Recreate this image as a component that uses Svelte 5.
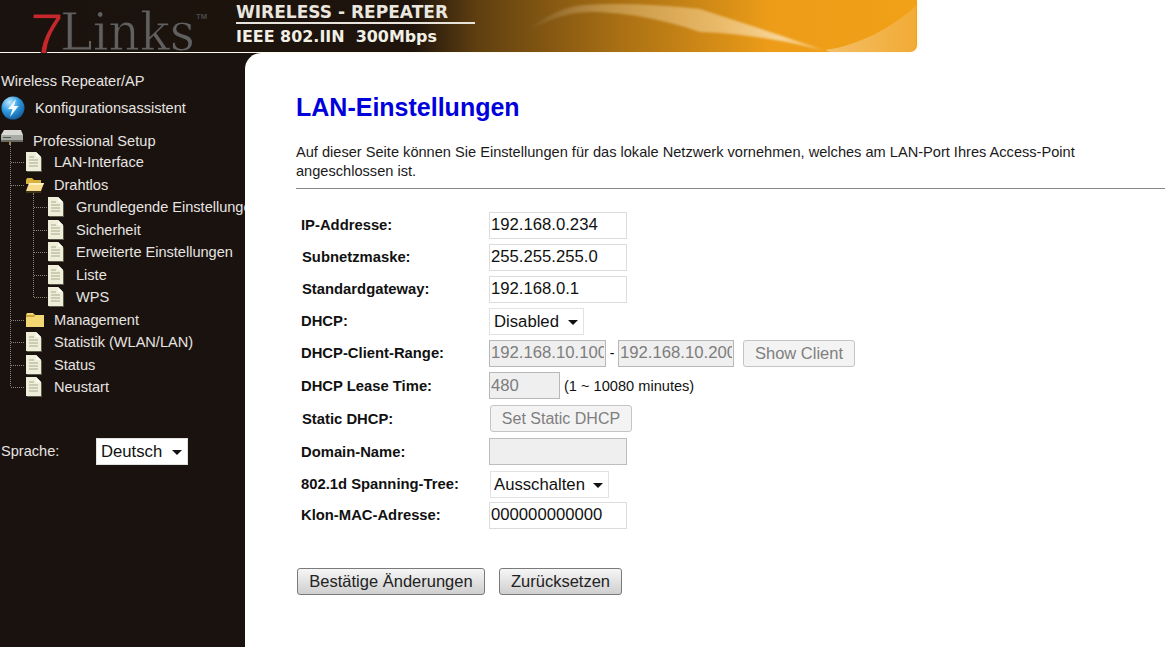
<script>
  const tree = [
    { label: 'LAN-Interface', icon: 'doc', depth: 1 },
    { label: 'Drahtlos', icon: 'open', depth: 1 },
    { label: 'Grundlegende Einstellungen', icon: 'doc', depth: 2 },
    { label: 'Sicherheit', icon: 'doc', depth: 2 },
    { label: 'Erweiterte Einstellungen', icon: 'doc', depth: 2 },
    { label: 'Liste', icon: 'doc', depth: 2 },
    { label: 'WPS', icon: 'doc', depth: 2 },
    { label: 'Management', icon: 'folder', depth: 1 },
    { label: 'Statistik (WLAN/LAN)', icon: 'doc', depth: 1 },
    { label: 'Status', icon: 'doc', depth: 1 },
    { label: 'Neustart', icon: 'doc', depth: 1 }
  ];
</script>

<div class="page">
  <header class="banner">
    <svg width="940" height="53" viewBox="0 0 940 53" aria-label="7Links Wireless Repeater">
      <defs>
        <linearGradient id="bg" x1="0" x2="1" y1="0" y2="0">
          <stop offset="0" stop-color="#1a120e" />
          <stop offset="0.45" stop-color="#1e140c" />
          <stop offset="0.52" stop-color="#5f3f10" />
          <stop offset="0.68" stop-color="#ab7114" />
          <stop offset="0.84" stop-color="#ec9c18" />
          <stop offset="1" stop-color="#f1a116" />
        </linearGradient>
        <linearGradient id="wave" x1="0" x2="1" y1="0" y2="0">
          <stop offset="0" stop-color="#fff" stop-opacity="0" />
          <stop offset="0.3" stop-color="#f0cf90" stop-opacity="0.4" />
          <stop offset="0.65" stop-color="#f6d8a0" stop-opacity="0.6" />
          <stop offset="0.85" stop-color="#fbe6c0" stop-opacity="0.75" />
          <stop offset="1" stop-color="#fbe2b0" stop-opacity="0.5" />
        </linearGradient>
        <linearGradient id="gloss" x1="0" x2="1" y1="0" y2="0">
          <stop offset="0" stop-color="#f6cf90" stop-opacity="0.7" />
          <stop offset="1" stop-color="#f4c070" stop-opacity="0.35" />
        </linearGradient>
        <filter id="halo" x="-2%" y="-10%" width="104%" height="125%"><feGaussianBlur stdDeviation="2.2" /></filter>
        <filter id="soft" x="-5%" y="-20%" width="110%" height="140%"><feGaussianBlur stdDeviation="0.9" /></filter>
      </defs>
      <path d="M0 0H917V45a7 7 0 0 1-7 7H0Z" fill="#fff3d8" filter="url(#halo)" />
      <path d="M0 0H917V45a7 7 0 0 1-7 7H0Z" fill="url(#bg)" />
      <path d="M525 32C545 17 560 7 585 5C630 2 680 7 700 9C740 22 790 38 825 51C790 42 745 33 700 32C660 18 620 12 590 12C565 12 545 22 525 32Z" fill="url(#wave)" filter="url(#soft)" />
      <path d="M825 50C860 46 895 25 916 6V45a7 7 0 0 1-7 7H830Z" fill="url(#gloss)" />

      <text class="seven" x="30" y="56">7</text>
      <text class="links" x="60" y="50" textLength="135" lengthAdjust="spacingAndGlyphs">Links</text>
      <text class="tm" x="196" y="19" textLength="11" lengthAdjust="spacingAndGlyphs">TM</text>

      <text class="w1" x="236" y="17.5" textLength="212" lengthAdjust="spacingAndGlyphs">WIRELESS - REPEATER</text>
      <rect x="236" y="22" width="239" height="2" fill="#e8e4dc" />
      <text class="w2" x="236" y="42" textLength="201" lengthAdjust="spacingAndGlyphs">IEEE 802.IIN  300Mbps</text>
    </svg>
  </header>

  <div class="body">
    <aside class="side">
      <div class="brand">Wireless Repeater/AP</div>
      <div class="wizard">
        <svg width="24" height="24" viewBox="0 0 24 24" aria-hidden="true">
          <defs>
            <radialGradient id="orb" cx="0.35" cy="0.25" r="0.9">
              <stop offset="0" stop-color="#bfe8ff" />
              <stop offset="0.45" stop-color="#2f9be0" />
              <stop offset="1" stop-color="#0b4a8a" />
            </radialGradient>
          </defs>
          <circle cx="12" cy="12" r="11.5" fill="url(#orb)" />
          <path d="M15 3 7 13h4.5L9 21l8.5-11H13Z" fill="#f4fbff" />
        </svg>
        <span>Konfigurationsassistent</span>
      </div>

      <nav class="tree">
        <span class="vline outer"></span>
        <span class="vline inner"></span>
        <div class="root">
          <svg width="24" height="16" viewBox="0 0 24 16" aria-hidden="true">
            <path d="M4 1h17l2 5H1Z" fill="#d8d8d4" />
            <rect x="1" y="6" width="22" height="5" fill="#a9aba6" />
            <rect x="3" y="8" width="8" height="1" fill="#4b5a48" />
            <rect x="1" y="11" width="22" height="2" fill="#6a6a62" />
            <rect x="9" y="13" width="2" height="3" fill="#b08a50" />
          </svg>
          <span>Professional Setup</span>
        </div>
        {#each tree as item}
          <div class="row" class:deep={item.depth === 2}>
            <span class="icon">
              {#if item.icon === 'doc'}
                <svg width="18" height="20" viewBox="0 0 18 20" aria-hidden="true">
                  <path d="M2 1h10l5 5v14H2Z" fill="#5a5a4c" />
                  <path d="M1 0h10l5 5v14H1Z" fill="#efefd9" />
                  <path d="M11 0v5h5Z" fill="#fbfbf2" />
                  <path d="M4 5h5M4 8h9M4 11h9M4 14h9" stroke="#a8a890" stroke-width="1" />
                </svg>
              {:else if item.icon === 'open'}
                <svg width="20" height="16" viewBox="0 0 20 16" aria-hidden="true">
                  <path d="M1 3l1-2h5l2 2h7v4H1Z" fill="#d9b23e" />
                  <path d="M1 14 4 6h15l-3 8Z" fill="#f6dc8c" />
                  <path d="M4 6h15l-1 2H4Z" fill="#fff2c0" />
                  <path d="M1 15h15" stroke="#6a5320" />
                </svg>
              {:else}
                <svg width="20" height="16" viewBox="0 0 20 16" aria-hidden="true">
                  <path d="M1 3l1-2h6l2 2h9v12H1Z" fill="#f3d773" />
                  <path d="M1 3h9l-1 2H1Z" fill="#caa63a" />
                </svg>
              {/if}
            </span>
            <span class="label">{item.label}</span>
          </div>
        {/each}
      </nav>

      <div class="lang">
        <span>Sprache:</span>
        <span class="select lang-select"><select><option>Deutsch</option></select></span>
      </div>
    </aside>

    <main class="main">
      <h1>LAN-Einstellungen</h1>
      <p>Auf dieser Seite können Sie Einstellungen für das lokale Netzwerk vornehmen, welches am LAN-Port Ihres Access-Point angeschlossen ist.</p>
      <hr />

      <form class="form">
        <div class="f"><label for="ip">IP-Addresse:</label><input id="ip" class="w138" value="192.168.0.234" /></div>
        <div class="f"><label for="sn" class="nudge">Subnetzmaske:</label><input id="sn" class="w138" value="255.255.255.0" /></div>
        <div class="f"><label for="gw" class="nudge">Standardgateway:</label><input id="gw" class="w138" value="192.168.0.1" /></div>
        <div class="f"><label for="dh">DHCP:</label><span class="select dhcp"><select id="dh"><option>Disabled</option></select></span></div>
        <div class="f">
          <label for="r1">DHCP-Client-Range:</label>
          <input id="r1" class="w117" disabled value="192.168.10.100" />
          <span class="dash">-</span>
          <input class="w116" disabled value="192.168.10.200" />
          <button type="button" class="btn off show" disabled>Show Client</button>
        </div>
        <div class="f tall"><label for="ls">DHCP Lease Time:</label><input id="ls" class="w71" disabled value="480" /><span class="hint">(1 ~ 10080 minutes)</span></div>
        <div class="f tall"><label class="nudge" for="st">Static DHCP:</label><button id="st" type="button" class="btn off static" disabled>Set Static DHCP</button></div>
        <div class="f tall"><label for="dn">Domain-Name:</label><input id="dn" class="w138 dark" disabled /></div>
        <div class="f"><label for="sp">802.1d Spanning-Tree:</label><span class="select span"><select id="sp"><option>Ausschalten</option></select></span></div>
        <div class="f mac"><label for="mc">Klon-MAC-Adresse:</label><input id="mc" class="w138" value="000000000000" /></div>
      </form>

      <div class="actions">
        <button type="button" class="btn apply">Bestätige Änderungen</button>
        <button type="button" class="btn reset">Zurücksetzen</button>
      </div>
    </main>
  </div>
</div>

<style>
  :global(body) { margin: 0; background: #fff; }
  .page { width: 1167px; height: 647px; overflow: hidden; font-family: "Liberation Sans", Arial, sans-serif; display: flex; flex-direction: column; }
  .banner { height: 53px; flex: none; }
  .banner svg { display: block; overflow: visible; }
  .seven { font: 400 61px "Liberation Sans", sans-serif; fill: #c5272c; stroke: #1a120e; stroke-width: 0.8; }
  .links { font: 400 52px "DejaVu Serif", serif; fill: #606060; stroke: #1a120e; stroke-width: 0.9; }
  .tm { font: 700 7px "Liberation Sans", sans-serif; fill: #4a4a4a; }
  .w1 { font: 700 17.5px "DejaVu Sans", sans-serif; fill: #e9e6df; }
  .w2 { font: 700 16px "DejaVu Sans", sans-serif; fill: #f2efe6; white-space: pre; }

  .body { flex: 1; display: flex; min-height: 0; background: linear-gradient(to bottom, #1a120e 20px, transparent 20px) no-repeat 0 0 / 270px 100%; }
  .side { width: 245px; flex: none; background: #1a120e; color: #e6e4e2; font-size: 14.6px; overflow: hidden; }
  .brand { padding: 20px 0 0 1px; line-height: 16px; }
  .wizard { display: flex; align-items: center; gap: 10px; margin-top: 4px; padding-left: 1px; height: 30px; }
  .tree { position: relative; margin-top: 7px; }
  .vline { position: absolute; border-left: 1px dotted #8b8474; }
  .vline.outer { left: 10px; top: 14px; height: 242px; }
  .vline.inner { left: 33px; top: 63px; height: 104px; }
  .root { display: flex; align-items: center; gap: 9px; height: 21px; }
  .root svg { margin-top: -7px; }
  .row { position: relative; display: flex; align-items: center; height: 22.5px; padding-left: 25px; white-space: nowrap; }
  .row.deep { padding-left: 47px; }
  .row::before { content: ""; position: absolute; left: 11px; top: 11px; width: 13px; border-top: 1px dotted #8b8474; }
  .row.deep::before { left: 34px; }
  .icon { width: 29px; flex: none; display: flex; align-items: center; }
  .icon svg { display: block; }
  .label { letter-spacing: -0.02px; }
  .lang { display: flex; align-items: center; margin-top: 39px; padding-left: 1px; }
  .lang > span:first-child { width: 95px; }

  .select { position: relative; display: inline-block; height: 27px; box-sizing: border-box; background: #fff; border: 1px solid #e2e2e2; }
  .select::after { content: ""; position: absolute; right: 5px; top: 11px; border: 5px solid transparent; border-top: 5px solid #111; border-bottom: 0; pointer-events: none; }
  select { appearance: none; -webkit-appearance: none; border: 0; outline: 0; background: transparent; width: 100%; height: 100%; font: 16.7px "Liberation Sans", sans-serif; color: #111; padding: 0 0 0 4px; display: block; }
  .lang-select { width: 92px; }
  .dhcp { width: 95px; }
  .span { width: 119px; margin-left: 1px; }
  .span select { padding-left: 3px; }

  .main { flex: 1; background: #fff; border-top-left-radius: 16px; padding: 0 2px 0 51px; min-width: 0; }
  h1 { margin: 40px 0 0; font-size: 25px; line-height: 28px; font-weight: 700; color: #0000dd; }
  p { margin: 22px 0 0; width: 800px; font-size: 14.6px; line-height: 19px; color: #1a1a1a; }
  hr { margin: 7px 0 0; border: 0; border-top: 1px solid #888; height: 0; }

  .form { margin-top: 20px; }
  .f { display: flex; align-items: center; height: 32px; }
  .f.tall { height: 33px; }
  .f.mac { height: 30px; }
  label { width: 193px; flex: none; padding-left: 5px; box-sizing: border-box; font-size: 14.8px; font-weight: 700; color: #111; }
  label.nudge { padding-left: 6px; }
  input { box-sizing: border-box; height: 27px; border: 1px solid #dcdcdc; background: #fff; font: 16.7px "Liberation Sans", sans-serif; color: #111; padding: 0 1px; outline: 0; }
  input:disabled { background: #efefef; border-color: #b8b8b8; color: #7d7d7d; }
  input.dark:disabled { border-color: #bdbdbd; }
  .w138 { width: 138px; }
  .w117 { width: 117px; }
  .w116 { width: 116px; }
  .w71 { width: 71px; }
  .dash { width: 12px; text-align: center; font-size: 14px; }
  .hint { font-size: 14.6px; margin-left: 4px; color: #111; }

  .btn { box-sizing: border-box; height: 27px; padding: 0; border: 1px solid #7a7a7a; border-radius: 3px; background: linear-gradient(#f6f6f6, #cfcfcf); font: 16.5px "Liberation Sans", sans-serif; color: #222; }
  .btn.off { background: #f3f3f3; border-color: #c4c4c4; color: #7f7f7f; }
  .show { width: 112px; margin-left: 9px; }
  .static { width: 142px; margin-left: 1px; font-size: 16px; }
  .actions { display: flex; gap: 14px; margin-top: 38px; margin-left: 1px; }
  .apply { width: 188px; }
  .reset { width: 123px; }
</style>
